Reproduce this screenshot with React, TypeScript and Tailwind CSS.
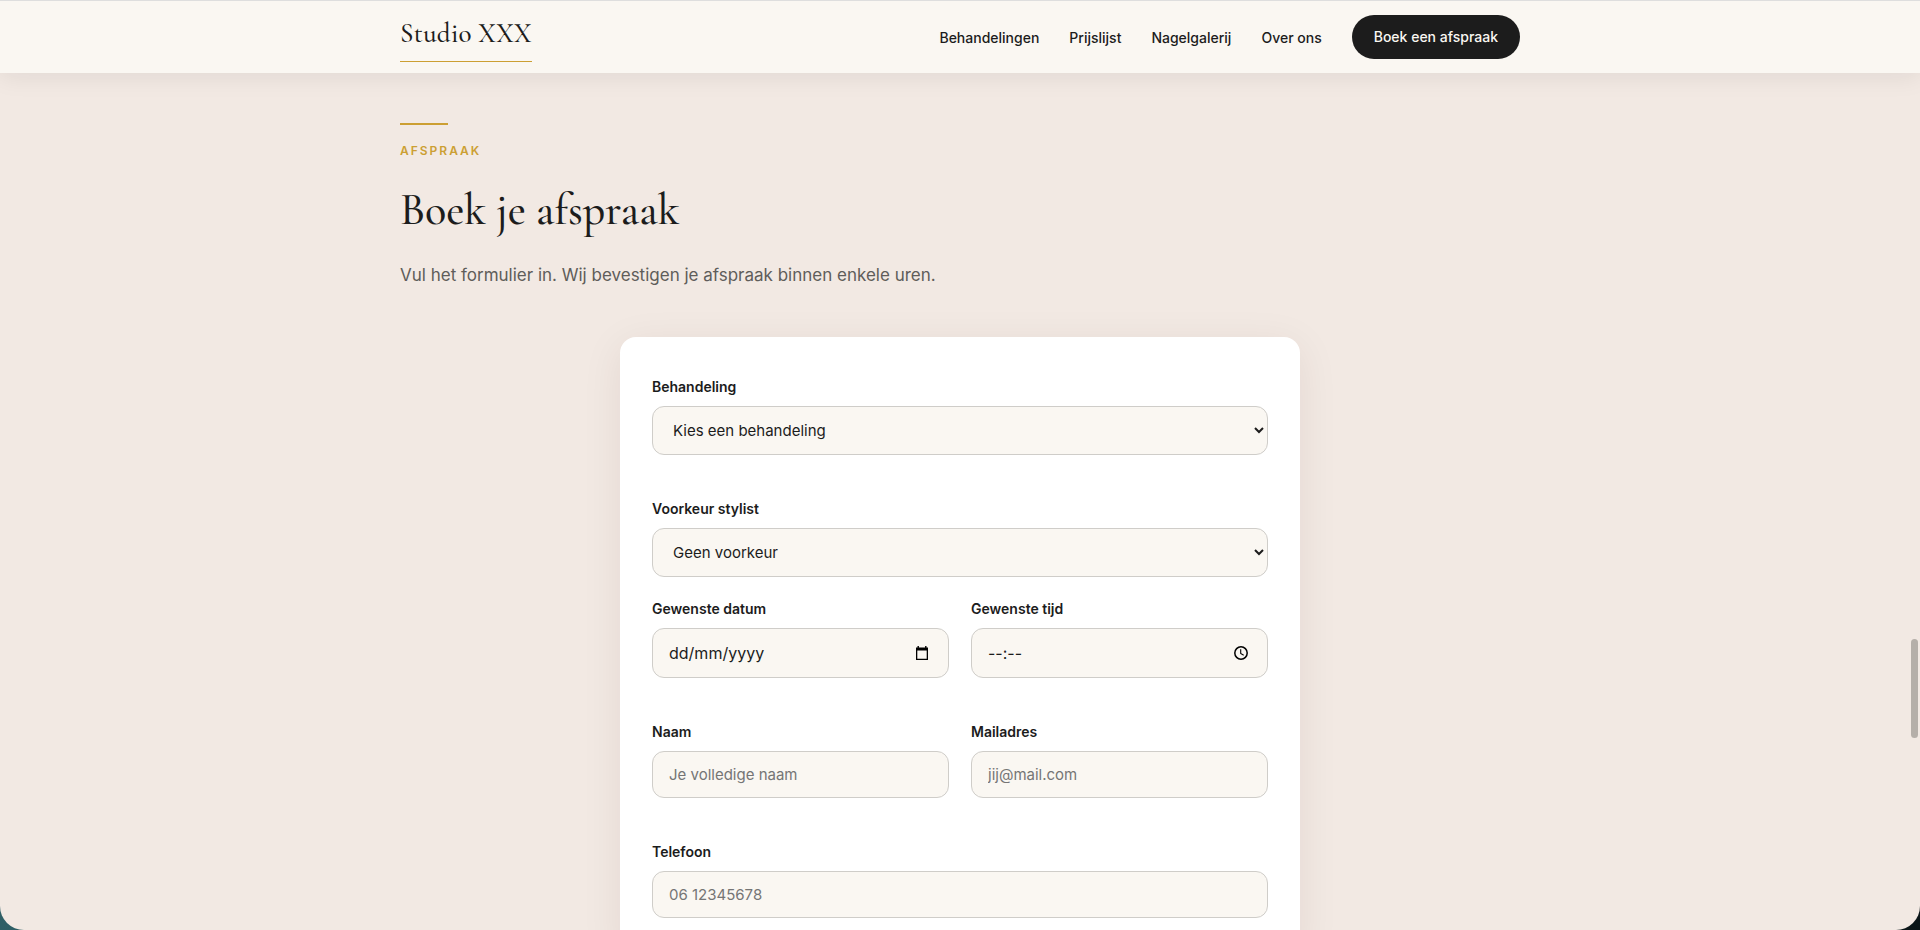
import React from 'react';

const navLinks = ['Behandelingen', 'Prijslijst', 'Nagelgalerij', 'Over ons'];

const fieldClass =
  'block w-full rounded-xl border border-[#cfcdc9] bg-[#faf7f2] px-4 text-[#1c1c1c] focus:outline-none focus:border-[#cc9f33]';
const inputClass = `${fieldClass} h-[47px] text-[15px] placeholder:text-[#757575]`;
const selectClass = `${fieldClass} h-[49px] text-[15px]`;
const pickerClass = `${fieldClass} h-[50px] text-[16px] placeholder:text-[#1c1c1c]`;

type FieldProps = {
  id: string;
  label: string;
  children: React.ReactNode;
};

const Field: React.FC<FieldProps> = ({ id, label, children }) => (
  <div>
    <label htmlFor={id} className="mb-2.5 block text-[14px] leading-[19px] font-semibold">
      {label}
    </label>
    {children}
  </div>
);

const CalendarIcon: React.FC = () => (
  <svg className="h-4 w-4" viewBox="0 0 16 16" fill="currentColor">
    <path d="M3.5 1h1.4v1.4h6.2V1h1.4v1.4H14V15H2V2.4h1.5V1zM3.3 5.6v8.1h9.4V5.6H3.3z" fillRule="evenodd" />
  </svg>
);

const ClockIcon: React.FC = () => (
  <svg className="h-4 w-4" viewBox="0 0 16 16" fill="none" stroke="currentColor">
    <circle cx="8" cy="8" r="6.2" strokeWidth={1.5} />
    <path d="M7.7 4.3v4.2l3 1.8" strokeWidth={1.1} />
  </svg>
);

const App: React.FC = () => {
  return (
    <div className="h-screen bg-[#24505a] bg-linear-to-r from-[#2f5f66] to-[#0b1518] font-['Inter',sans-serif] text-[#1c1c1c]">
      <div className="relative flex h-full flex-col overflow-hidden rounded-b-3xl bg-[#f2e9e3]">
        <header className="relative z-10 shrink-0 border-t border-[#dedede] bg-[#faf7f2] shadow-[0_4px_24px_rgba(28,28,28,0.08)]">
          <div className="mx-auto flex h-[72px] max-w-[1168px] items-center justify-between px-6">
            <a
              href="#"
              className="border-b border-[#cc9f33] pb-1.5 font-['Cormorant_Garamond','Liberation_Serif',serif] text-[27px] leading-[42px] font-medium tracking-[0.01em]"
            >
              Studio XXX
            </a>
            <nav className="flex items-center gap-[30px] text-[14px] font-medium">
              {navLinks.map((link) => (
                <a key={link} href="#">
                  {link}
                </a>
              ))}
              <a href="#" className="rounded-full bg-[#1c1c1c] px-[22px] py-3 leading-5 text-[#faf7f2]">
                Boek een afspraak
              </a>
            </nav>
          </div>
        </header>

        <main className="min-h-0 flex-1">
          <section className="mx-auto max-w-[1168px] px-6 pt-[50px]">
            <div className="mb-4 h-0.5 w-12 bg-[#cc9f33]" />
            <p className="text-[12px] leading-5 font-semibold tracking-[2px] text-[#cc9f33] uppercase">Afspraak</p>
            <h1 className="mt-[22px] font-['Cormorant_Garamond','Liberation_Serif',serif] text-[44px] leading-[54px] font-medium">
              Boek je afspraak
            </h1>
            <p className="mt-6 text-[17px] leading-7 text-[#5f5d5a]">
              Vul het formulier in. Wij bevestigen je afspraak binnen enkele uren.
            </p>

            <form className="mx-auto mt-12 flex max-w-[680px] flex-col gap-[22px] rounded-2xl bg-white px-8 py-10 shadow-[0_8px_40px_rgba(60,30,10,0.08)]">
              <div className="mb-[22px]">
                <Field id="behandeling" label="Behandeling">
                  <select id="behandeling" className={selectClass}>
                    <option>Kies een behandeling</option>
                  </select>
                </Field>
              </div>

              <Field id="stylist" label="Voorkeur stylist">
                <select id="stylist" className={selectClass}>
                  <option>Geen voorkeur</option>
                </select>
              </Field>

              <div className="mb-[22px] grid grid-cols-2 gap-[22px]">
                <Field id="datum" label="Gewenste datum">
                  <div className="relative">
                    <input id="datum" type="text" placeholder="dd/mm/yyyy" className={pickerClass} />
                    <span className="pointer-events-none absolute inset-y-0 right-[19px] flex items-center text-black">
                      <CalendarIcon />
                    </span>
                  </div>
                </Field>
                <Field id="tijd" label="Gewenste tijd">
                  <div className="relative">
                    <input id="tijd" type="text" placeholder="--:--" className={pickerClass} />
                    <span className="pointer-events-none absolute inset-y-0 right-[19px] flex items-center text-black">
                      <ClockIcon />
                    </span>
                  </div>
                </Field>
              </div>

              <div className="mb-[22px] grid grid-cols-2 gap-[22px]">
                <Field id="naam" label="Naam">
                  <input id="naam" type="text" placeholder="Je volledige naam" className={inputClass} />
                </Field>
                <Field id="mail" label="Mailadres">
                  <input id="mail" type="email" placeholder="jij@mail.com" className={inputClass} />
                </Field>
              </div>

              <Field id="telefoon" label="Telefoon">
                <input id="telefoon" type="tel" placeholder="06 12345678" className={inputClass} />
              </Field>
            </form>
          </section>
        </main>

        {/* scroll thumb */}
        <div className="absolute top-[639px] right-0.5 z-20 h-[99px] w-[7px] rounded-full bg-[#b5afa9]" />
      </div>
    </div>
  );
};

export default App;
